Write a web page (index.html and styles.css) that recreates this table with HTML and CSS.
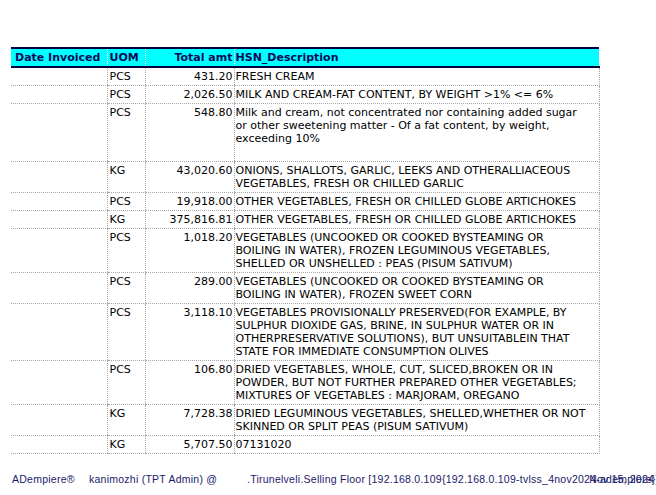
FILE: index.html
```html
<!DOCTYPE html>
<html>
<head>
<meta charset="utf-8">
<link rel="stylesheet" href="styles.css">
</head>
<body>
<div class="page">
  <table class="report">
    <colgroup>
      <col class="c-date"><col class="c-uom"><col class="c-amt"><col class="c-desc">
    </colgroup>
    <thead>
      <tr>
        <th class="first">Date Invoiced</th>
        <th>UOM</th>
        <th class="num">Total amt</th>
        <th class="last">HSN_Description</th>
      </tr>
    </thead>
    <tbody>
      <tr><td class="first"></td><td>PCS</td><td class="num">431.20</td><td class="last">FRESH CREAM</td></tr>
      <tr><td class="first"></td><td>PCS</td><td class="num">2,026.50</td><td class="last">MILK AND CREAM-FAT CONTENT, BY WEIGHT &gt;1% &lt;= 6%</td></tr>
      <tr class="tall"><td class="first"></td><td>PCS</td><td class="num">548.80</td><td class="last">Milk and cream, not concentrated nor containing added sugar or other sweetening matter - Of a fat content, by weight, exceeding 10%</td></tr>
      <tr><td class="first"></td><td>KG</td><td class="num">43,020.60</td><td class="last">ONIONS, SHALLOTS, GARLIC, LEEKS AND OTHERALLIACEOUS VEGETABLES, FRESH OR CHILLED GARLIC</td></tr>
      <tr><td class="first"></td><td>PCS</td><td class="num">19,918.00</td><td class="last">OTHER VEGETABLES, FRESH OR CHILLED GLOBE ARTICHOKES</td></tr>
      <tr><td class="first"></td><td>KG</td><td class="num">375,816.81</td><td class="last">OTHER VEGETABLES, FRESH OR CHILLED GLOBE ARTICHOKES</td></tr>
      <tr><td class="first"></td><td>PCS</td><td class="num">1,018.20</td><td class="last">VEGETABLES (UNCOOKED OR COOKED BYSTEAMING OR BOILING IN WATER), FROZEN LEGUMINOUS VEGETABLES, SHELLED OR UNSHELLED : PEAS (PISUM SATIVUM)</td></tr>
      <tr><td class="first"></td><td>PCS</td><td class="num">289.00</td><td class="last">VEGETABLES (UNCOOKED OR COOKED BYSTEAMING OR BOILING IN WATER), FROZEN SWEET CORN</td></tr>
      <tr><td class="first"></td><td>PCS</td><td class="num">3,118.10</td><td class="last">VEGETABLES PROVISIONALLY PRESERVED(FOR EXAMPLE, BY SULPHUR DIOXIDE GAS, BRINE, IN SULPHUR WATER OR IN OTHERPRESERVATIVE SOLUTIONS), BUT UNSUITABLEIN THAT STATE FOR IMMEDIATE CONSUMPTION OLIVES</td></tr>
      <tr><td class="first"></td><td>PCS</td><td class="num">106.80</td><td class="last">DRIED VEGETABLES, WHOLE, CUT, SLICED,BROKEN OR IN POWDER, BUT NOT FURTHER PREPARED OTHER VEGETABLES; MIXTURES OF VEGETABLES : MARJORAM, OREGANO</td></tr>
      <tr><td class="first"></td><td>KG</td><td class="num">7,728.38</td><td class="last">DRIED LEGUMINOUS VEGETABLES, SHELLED,WHETHER OR NOT SKINNED OR SPLIT PEAS (PISUM SATIVUM)</td></tr>
      <tr><td class="first"></td><td>KG</td><td class="num">5,707.50</td><td class="last">07131020</td></tr>
    </tbody>
  </table>
  <div class="footer">
    <span class="brand">ADempiere®</span>
    <span class="user">kanimozhi (TPT Admin) @</span>
    <span class="org">.Tirunelveli.Selling Floor [192.168.0.109{192.168.0.109-tvlss_4nov2024-adempiere}]</span>
    <span class="date">Nov 15, 2024</span>
  </div>
</div>
</body>
</html>
```

FILE: styles.css
```css
html, body {
  margin: 0;
  padding: 0;
  background: #ffffff;
}
body {
  font-family: "DejaVu Sans", Verdana, sans-serif;
  font-size: 11px;
  color: #000000;
  width: 656px;
  height: 495px;
  overflow: hidden;
}
.page {
  position: relative;
  height: 495px;
  padding: 47px 0 0 11px;
  box-sizing: border-box;
}
.report {
  border-collapse: collapse;
  table-layout: fixed;
  width: 588px;
}
.c-date { width: 96px; }
.c-uom { width: 38px; }
.c-amt { width: 89px; }
.c-desc { width: 365px; }

.report th {
  background: #00ffff;
  color: #0a0a5a;
  font-weight: bold;
  text-align: left;
  line-height: 13px;
  padding: 2px 2px 2px 2px;
  border-top: 2px solid #00003a;
  border-bottom: 2px solid #00003a;
  border-left: 1px dotted #ffffff;
  white-space: nowrap;
}
.report th.first { border-left: none; padding-left: 4px; }
.report th.num { text-align: right; padding-right: 1px; }
.report th.last { padding-left: 1px; }

.report td {
  line-height: 13px;
  padding: 2px 2px 2px 2px;
  vertical-align: top;
  border-bottom: 1px dotted #a8a8a8;
  border-left: 1px dotted #a8a8a8;
}
.report td.first { border-left: none; }
.report td.num { text-align: right; padding-right: 1px; }
.report td.last { border-right: 1px dotted #a8a8a8; padding-left: 1px; padding-right: 9px; }
.report tr.tall td { height: 53px; }

.footer {
  position: absolute;
  left: 12px;
  right: 0;
  top: 473px;
  display: flex;
  font-family: "Liberation Sans", Arial, sans-serif;
  font-size: 10.5px;
  letter-spacing: 0.25px;
  color: #1a1a6a;
  white-space: nowrap;
  line-height: 13px;
}
.brand { width: 77px; flex-shrink: 0; }
.user { width: 158px; flex-shrink: 0; }
.org { flex-shrink: 0; }
.date {
  position: absolute;
  right: 2px;
  top: 0;
  letter-spacing: 0.2px;
}
```
